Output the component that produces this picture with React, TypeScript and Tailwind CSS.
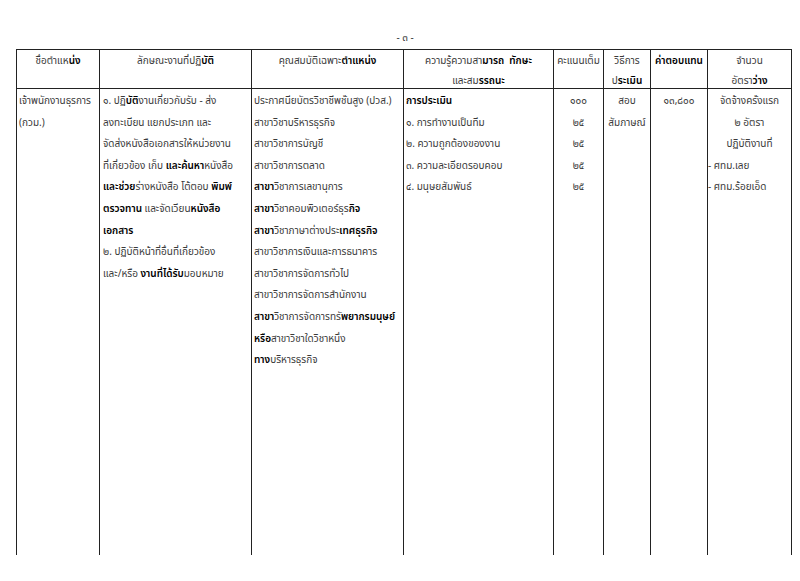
import React from 'react';

const B = ({ children }: { children: React.ReactNode }) => (
  <span className="font-semibold text-black">{children}</span>
);

const Line = ({ children, className = '' }: { children: React.ReactNode; className?: string }) => (
  <div className={`h-[21.6px] leading-[21.6px] whitespace-nowrap ${className}`}>{children}</div>
);

const HLine = ({ children }: { children: React.ReactNode }) => (
  <div className="h-[20px] leading-[20px] whitespace-nowrap">{children}</div>
);

const App = () => {
  return (
    <div className="w-[800px] h-[581px] bg-white text-[#3a3a3a] text-[10px] font-['Noto_Sans','Noto_Sans_Thai','DejaVu_Sans',sans-serif] overflow-hidden">
      <div className="h-[49px] pt-[30px] text-center text-[10px] pl-[10px]">- ๓ -</div>

      <div className="ml-[16px] w-[776px] grid grid-cols-[83px_152px_152px_150px_50px_47px_57px_85px]">
        {/* header */}
        <div className="h-[40px] border-t border-l border-b border-[#222] text-center">
          <HLine>ชื่อตำแห<B>น่ง</B></HLine>
        </div>
        <div className="h-[40px] border-t border-l border-b border-[#222] text-center">
          <HLine>ลักษณะงานที่ปฏิ<B>บัติ</B></HLine>
        </div>
        <div className="h-[40px] border-t border-l border-b border-[#222] text-center">
          <HLine>คุณสมบัติเฉพาะ<B>ตำแหน่ง</B></HLine>
        </div>
        <div className="h-[40px] border-t border-l border-b border-[#222] text-center">
          <HLine>ความรู้ความสา<B>มารถ&nbsp; ทักษะ</B></HLine>
          <HLine>และสม<B>รรถนะ</B></HLine>
        </div>
        <div className="h-[40px] border-t border-l border-b border-[#222] text-center">
          <HLine>คะแนนเต็ม</HLine>
        </div>
        <div className="h-[40px] border-t border-l border-b border-[#222] text-center">
          <HLine>วิธีการ</HLine>
          <HLine>ป<B>ระเมิน</B></HLine>
        </div>
        <div className="h-[40px] border-t border-l border-b border-[#222] text-center">
          <HLine><B>ค่าตอบแทน</B></HLine>
        </div>
        <div className="h-[40px] border-t border-l border-r border-b border-[#222] text-center">
          <HLine>จำนวน</HLine>
          <HLine>อัตรา<B>ว่าง</B></HLine>
        </div>

        {/* body */}
        <div className="h-[466px] border-l border-[#222] pl-[2px] pt-[1px]">
          <Line>เจ้าพนักงานธุรการ</Line>
          <Line>(กวม.)</Line>
        </div>
        <div className="h-[466px] border-l border-[#222] pl-[3px] pt-[1px]">
          <Line>๑. ปฏิ<B>บัติ</B>งานเกี่ยวกับรับ - ส่ง</Line>
          <Line>ลงทะเบียน แยกประเภท และ</Line>
          <Line>จัดส่งหนังสือเอกสารให้หน่วยงาน</Line>
          <Line>ที่เกี่ยวข้อง เก็บ <B>และค้นหา</B>หนังสือ</Line>
          <Line><B>และช่วย</B>ร่างหนังสือ โต้ตอบ <B>พิมพ์</B></Line>
          <Line><B>ตรวจทาน</B> และจัดเวียน<B>หนังสือ</B></Line>
          <Line><B>เอกสาร</B></Line>
          <Line>๒. ปฏิบัติหน้าที่อื่นที่เกี่ยวข้อง</Line>
          <Line>และ/หรือ <B>งานที่ได้รับ</B>มอบหมาย</Line>
        </div>
        <div className="h-[466px] border-l border-[#222] pl-[2px] pt-[1px]">
          <Line>ประกาศนียบัตรวิชาชีพชั้นสูง (ปวส.)</Line>
          <Line>สาขาวิชาบริหารธุรกิจ</Line>
          <Line>สาขาวิชาการบัญชี</Line>
          <Line>สาขาวิชาการตลาด</Line>
          <Line><B>สาขา</B>วิชาการเลขานุการ</Line>
          <Line><B>สาขา</B>วิชาคอมพิวเตอร์ธุร<B>กิจ</B></Line>
          <Line><B>สาขา</B>วิชาภาษาต่างประ<B>เทศธุรกิจ</B></Line>
          <Line>สาขาวิชาการเงินและการธนาคาร</Line>
          <Line>สาขาวิชาการจัดการทั่วไป</Line>
          <Line>สาขาวิชาการจัดการสำนักงาน</Line>
          <Line><B>สาขา</B>วิชาการจัดการทรั<B>พยากรมนุษย์</B></Line>
          <Line><B>หรือ</B>สาขาวิชาใดวิชาหนึ่ง</Line>
          <Line><B>ทาง</B>บริหารธุรกิจ</Line>
        </div>
        <div className="h-[466px] border-l border-[#222] pl-[2px] pt-[1px]">
          <Line><B>การประเมิน</B></Line>
          <Line>๑. การทำงานเป็นทีม</Line>
          <Line>๒. ความถูกต้องของงาน</Line>
          <Line>๓. ความละเอียดรอบคอบ</Line>
          <Line>๔. มนุษยสัมพันธ์</Line>
        </div>
        <div className="h-[466px] border-l border-[#222] pt-[1px] text-center">
          <Line>๑๐๐</Line>
          <Line>๒๕</Line>
          <Line>๒๕</Line>
          <Line>๒๕</Line>
          <Line>๒๕</Line>
        </div>
        <div className="h-[466px] border-l border-[#222] pt-[1px] text-center">
          <Line>สอบ</Line>
          <Line>สัมภาษณ์</Line>
        </div>
        <div className="h-[466px] border-l border-[#222] pt-[1px] text-center">
          <Line>๑๓,๘๐๐</Line>
        </div>
        <div className="h-[466px] border-l border-r border-[#222] pt-[1px]">
          <Line className="text-center">จัดจ้างครั้งแรก</Line>
          <Line className="text-center">๒ อัตรา</Line>
          <Line className="text-center">ปฏิบัติงานที่</Line>
          <Line>- ศทม.เลย</Line>
          <Line>- ศทม.ร้อยเอ็ด</Line>
        </div>
      </div>
    </div>
  );
};

export default App;
